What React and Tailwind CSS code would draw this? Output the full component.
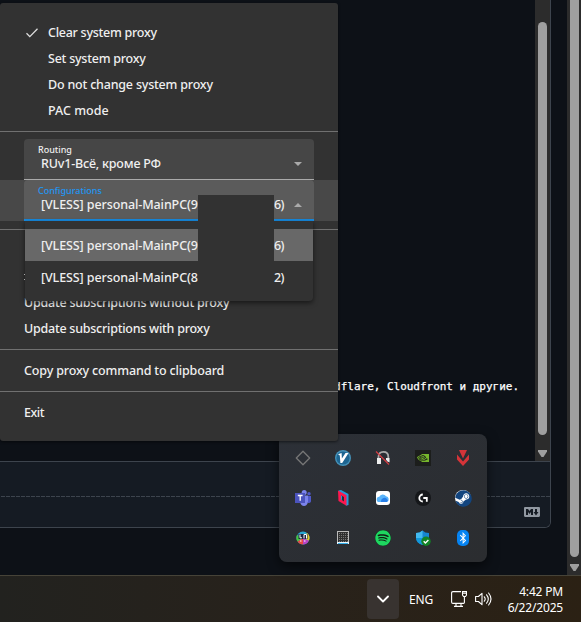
import { FaBluetoothB, FaSpotify, FaSteam } from "react-icons/fa";
import { SiNvidia } from "react-icons/si";

const ui = "font-['Noto_Sans','Open_Sans',sans-serif]";

function Page() {
  return (
    <div className="flex h-[575px] w-full overflow-hidden bg-[#0d1117]">
      <div className="flex h-[528px] w-[551px] flex-col overflow-hidden rounded-br-md border-r border-b border-[#3d444d]">
        <div className="flex h-[461px] shrink-0">
          <div className="flex flex-1 items-end justify-end pr-4 pb-[65px]">
            <p className="font-['DejaVu_Sans_Mono','Liberation_Mono',monospace] text-[11px] leading-[18px] tracking-[-0.02px] whitespace-pre text-white [-webkit-text-stroke:0.25px_white]">
              Cloudflare, Cloudfront и другие.
            </p>
          </div>
          <div className="flex w-[15px] flex-col items-center bg-[#2c2c2c] pt-[22px]">
            <div className="h-[413px] w-[9px] rounded-full bg-[#9f9f9f]" />
            <svg className="mt-[15px] h-[7px] w-[9px]" viewBox="0 0 9 7">
              <path d="M0 0h9v1.5L5.5 7h-2L0 1.5z" fill="#9f9f9f" />
            </svg>
          </div>
        </div>
        <div className="flex flex-1 flex-col border-t border-[#3d444d] bg-[#151b23]">
          <svg className="mt-[34px] h-px w-full shrink-0">
            <path d="M1 .5H551" stroke="#3d444d" strokeDasharray="4 1" />
          </svg>
          <div className="flex flex-1 items-center justify-end pr-[10px]">
            <svg className="h-4 w-4" viewBox="0 0 16 16" fill="#9198a1">
              <path d="M14.85 3c.63 0 1.15.52 1.14 1.15v7.7c0 .63-.51 1.15-1.15 1.15H1.15C.52 13 0 12.48 0 11.84V4.15C0 3.52.52 3 1.15 3ZM9 11V5H7L5.5 7 4 5H2v6h2V8l1.5 1.92L7 8v3Zm2.99.5L14.5 8H13V5h-2v3H9.5Z" />
            </svg>
          </div>
        </div>
      </div>
      <div className="ml-auto flex w-[14px] flex-col items-center bg-[#2c2c2c]">
        <div className="h-[557px] w-[9px] rounded-b-full bg-[#9f9f9f]" />
        <svg className="mt-[7px] h-[7px] w-[9px]" viewBox="0 0 9 7">
          <path d="M0 0h9v1.5L5.5 7h-2L0 1.5z" fill="#9f9f9f" />
        </svg>
      </div>
    </div>
  );
}

function Taskbar() {
  return (
    <div className={`${ui} flex h-[47px] items-center border-t border-[#464338] bg-linear-to-r from-[#22221f] via-[#28221b] to-[#2b2114] pl-[367px] text-white`}>
      <div className="flex h-10 w-8 items-center justify-center rounded bg-[#383330]">
        <svg className="h-2 w-3" viewBox="0 0 12 8" fill="none" stroke="white" strokeWidth="1.8" strokeLinecap="round" strokeLinejoin="round">
          <path d="M1 1.5l5 5 5-5" />
        </svg>
      </div>
      <span className="mt-[2px] ml-[10px] w-[42px] text-[12px] tracking-[-0.2px]">ENG</span>
      <svg className="h-[17px] w-4 shrink-0" viewBox="0 0 16 17" fill="none" stroke="white" strokeWidth="1.1">
        <path d="M10 .6H2Q.6.6.6 2v9q0 1.4 1.4 1.4h10.5q.9 0 .9-.9V6M5 12.5v3m5-3v3M3 15.4h9M11.5.6h4v3.5l-1 1.4h-2l-1-1.4zM11.5 2.3h4" />
      </svg>
      <svg className="ml-2 h-4 w-[17px] shrink-0" viewBox="0 0 17 16" fill="none" stroke="white" strokeWidth="1.1" strokeLinecap="round" strokeLinejoin="round">
        <path d="M.6 5.5h2.8L7 2.3v11.4l-3.6-3.2H.6zM9.3 5.8q1.8 2.2 0 4.4M11.6 3.8q3.4 4.2 0 8.4M13.6 2q4.8 6 0 12" />
      </svg>
      <div className="mr-[18px] ml-auto pt-px text-right text-[12px] leading-4 tracking-[-0.18px]">
        <div>4:42 PM</div>
        <div>6/22/2025</div>
      </div>
    </div>
  );
}

function Item({ children, checked, inset, track = "" }) {
  return (
    <div className={`flex h-[26px] items-center pl-6 ${track}`}>
      {inset && (
        <span className="flex w-6 items-center pl-[2px]">
          {checked && (
            <svg className="h-[10px] w-3" viewBox="0 0 12 10" fill="none" stroke="#dedede" strokeWidth="1.3">
              <path d="M.5 5.3l3.3 3.3L11.5.8" />
            </svg>
          )}
        </span>
      )}
      {children}
    </div>
  );
}

function Choice({ tail, children }) {
  return (
    <>
      <span className="w-[157px] overflow-hidden tracking-[-0.1px]">{children}</span>
      <span className="ml-[76px] flex w-[11px] justify-start overflow-visible tracking-[-0.7px]">{tail}</span>
    </>
  );
}

function ProxyMenu() {
  return (
    <div className={`${ui} absolute top-[3px] left-0 h-[438px] w-[338px] rounded-[3px] bg-[#323232] text-[12.5px] leading-4 font-medium whitespace-nowrap text-[#efefef] shadow-[0_1px_3px_#0008]`}>
      <div className="h-[129px] border-b border-[#707070] pt-[17px]">
        <Item inset checked track="tracking-[-0.26px]">Clear system proxy</Item>
        <Item inset track="tracking-[-0.24px]">Set system proxy</Item>
        <Item inset track="tracking-[-0.2px]">Do not change system proxy</Item>
        <Item inset track="tracking-[0.02px]">PAC mode</Item>
      </div>
      <div className="mx-6 mt-[7px] flex h-[41px] flex-col rounded-t border-b border-[#aaa] bg-[#464646] pt-[5px] pl-[14px]">
        <span className="h-[11px] text-[9px] leading-[11px]">Routing</span>
        <div className="mt-px flex h-[16px] items-center justify-between pr-3 pl-[3px]">
          <span className="tracking-[-0.18px]">RUv1-Всё, кроме РФ</span>
          <svg className="h-1 w-2" viewBox="0 0 8 4"><path d="M0 0h8L4 4z" fill="#aaa" /></svg>
        </div>
      </div>
      <div className="h-[41px] bg-[#484848] px-6">
        <div className="h-[41px] rounded-t border-b-2 border-[#168ae0] bg-[#5b5b5b] pt-[5px] pl-[14px]">
          <div className="h-[11px] text-[9px] leading-[11px] text-[#2196f3]">Configurations</div>
          <div className="mt-px flex h-4 items-center pl-[3px]">
            <Choice tail="6)">[VLESS] personal-MainPC(9</Choice>
            <svg className="ml-[9px] h-1 w-2" viewBox="0 0 8 4"><path d="M0 4h8L4 0z" fill="#aaa" /></svg>
          </div>
        </div>
      </div>
      <div className="mt-2 h-px bg-[#707070]" />
      <div className="pt-[60px]">
        <Item track="tracking-[-0.24px]">Update subscriptions without proxy</Item>
        <Item track="tracking-[-0.25px]">Update subscriptions with proxy</Item>
      </div>
      <div className="mt-[7px] border-y border-[#707070] py-2 pb-[7px]">
        <Item track="tracking-[-0.15px]">Copy proxy command to clipboard</Item>
      </div>
      <div className="pt-2"><Item track="tracking-[-0.5px]">Exit</Item></div>
      <div className="absolute top-[218px] left-[25px] h-20 w-[288px] rounded-b bg-[#323232] pt-2 shadow-[0_2px_5px_#0008]">
        <div className="flex h-8 items-center bg-[#686868] pt-[2px] pl-4">
          <Choice tail="6)">[VLESS] personal-MainPC(9</Choice>
        </div>
        <div className="flex h-8 items-center pt-[2px] pl-4">
          <Choice tail="2)">[VLESS] personal-MainPC(8</Choice>
        </div>
      </div>
      <div className="absolute top-[192px] left-[198px] h-[104px] w-[76px] bg-[#323232]" />
      <div className="absolute top-[271px] left-6 h-[6px] w-px border-y border-[#aaa]" />
    </div>
  );
}

const svg = "h-4 w-4";

function Tray() {
  return (
    <div className="absolute top-[434px] left-[279px] grid h-32 w-52 grid-cols-5 grid-rows-3 place-items-center rounded-lg bg-linear-to-br from-[#2c3037] to-[#2b2d30] p-1 shadow-[0_4px_12px_#0009]">
      <svg className={svg} viewBox="0 0 16 16"><path d="M8 1.3L14.7 8 8 14.7 1.3 8z" fill="none" stroke="#777" strokeWidth="1.3" strokeLinejoin="round" /></svg>
      <svg className={svg} viewBox="0 0 16 16"><circle cx="8" cy="8" r="8" fill="#4592b9" /><circle cx="8" cy="8" r="6.6" fill="#1d6591" /><path d="M3 4.2l3.6-1.2.3 5.5L10.5 3h3L7.2 13H5.4L4.8 5.6z" fill="#fff" /></svg>
      <svg className={svg} viewBox="0 0 16 16"><path d="M3.5 9V7C3.5 3.5 5.3 1.8 8.3 1.8s5 2 5 5V12" fill="none" stroke="#aaa" strokeWidth="1.8" /><path d="M2 8h4v6H2zM11 8h3.5v4.5L11 10z" fill="#eee" /><path d="M1 1.5L14 14.5" stroke="#d13b42" strokeWidth="1.3" /></svg>
      <div className="flex h-4 w-4 items-center justify-center bg-[#1c1e1c]"><SiNvidia size={12} color="#76b62c" /></div>
      <svg className={svg} viewBox="0 0 16 16" fill="#d53439"><path d="M4 0h8L8 8.5zM2 4.5l6 7 6-7v5l-6 6.5-6-6.5z" /></svg>

      <svg className={svg} viewBox="0 0 16 16"><circle cx="9.2" cy="2.5" r="2.5" fill="#7b83eb" /><circle cx="14" cy="3.8" r="1.7" fill="#5059c9" /><path d="M7 5.5h6V12q-1 4-4 4t-4-4z" fill="#7b83eb" /><path d="M13 6h3v5q0 2-3 2z" fill="#5059c9" /><path d="M0 3h10v10H0z" fill="#4b53bc" /><path d="M2.8 5.5h4.8M5.2 5.5v5.3" stroke="#fff" strokeWidth="1.3" /></svg>
      <svg className={svg} viewBox="0 0 16 16"><path d="M3.5.5L6 0l7.5 4v11L11 15.7z" fill="#2698d9" /><path d="M3 .5l8.5 4.8v10.4L3.5 11z" fill="#ff174f" /><path d="M6 5.3v4.3l3 2V7z" fill="#2a3038" /><path d="M6 5.3v4.3l1 .6V6z" fill="#2698d9" /></svg>
      <svg className={svg} viewBox="0 0 16 16"><rect x="1" y="1" width="14" height="14" rx="3" fill="#fff" /><path d="M4.3 12a2.6 2.6 0 010-5.2A3.7 3.7 0 0111 6.3 3 3 0 0112 12z" fill="#5ab4fa" /><path d="M6 12a3.5 3.5 0 016-3 2 2 0 010 3z" fill="#287fe9" /></svg>
      <svg className={svg} viewBox="0 0 16 16"><circle cx="8" cy="8" r="8" fill="#15171a" /><path d="M7.8 4.5a3.5 3.5 0 100 7M8.3 8h3.5v3.7" fill="none" stroke="#fff" strokeWidth="1.8" /></svg>
      <div className="flex h-4 w-4 items-center justify-center rounded-full bg-white"><FaSteam size={17} color="#12457f" className="shrink-0" /></div>

      <svg className={svg} viewBox="0 0 16 16"><circle cx="8" cy="8" r="6.5" fill="#29a9d4" /><path d="M8 8L2 5A6.5 6.5 0 002.5 11.5z" fill="#45c642" /><path d="M8 8l-5.5 3.5A6.5 6.5 0 008 14.5z" fill="#e84a42" /><path d="M8 8v6.5a6.5 6.5 0 006-4z" fill="#b943c4" /><path d="M8 8l6 2.5A6.5 6.5 0 0012 3z" fill="#e5c929" /><path d="M3.5 4h9v5h-9z" fill="#1c2844" /><path d="M5 4.5v3.3h2M9 8.5V4.5h2.5v4" fill="none" stroke="#fff" /><path d="M5 11h1.5M9 11h1.5" stroke="#fff" /></svg>
      <svg className={svg} viewBox="0 0 16 16"><path d="M2 1h12v13H2z" fill="#bbb" /><path d="M3 2h10v10H3z" fill="#303030" /><path d="M4 3.5h9M4 5.5h9M4 7.5h9M4 9.5h9M4 11.5h9" stroke="#777" strokeDasharray="1 1" /><path d="M2 13h12" stroke="#e8f6fd" strokeWidth="2" /><path d="M3 13.5h10" stroke="#36aee9" /></svg>
      <div className="flex h-4 w-4 items-center justify-center rounded-full bg-[#101c14]"><FaSpotify size={16} color="#1ed760" /></div>
      <svg className={svg} viewBox="0 0 16 16"><path d="M7.5.5Q10 3 14 3v4q0 6-6.5 8Q1 13 1 7V3q4 0 6.5-2.5z" fill="#1686d1" /><path d="M7.5.5V8H1V3q4 0 6.5-2.5z" fill="#42baf0" /><path d="M7.5 8v7Q1 13 1 8z" fill="#1298dc" /><circle cx="11" cy="11.3" r="4.7" fill="#128325" /><path d="M8.7 11.3l1.7 1.7 3-3.1" fill="none" stroke="#fff" strokeWidth="1.4" /></svg>
      <div className="flex h-4 w-3 items-center justify-center rounded-[5px] bg-[#0583f2]"><FaBluetoothB size={12} color="white" /></div>
    </div>
  );
}

export default function App() {
  return (
    <div className="relative h-[622px] w-[581px] overflow-hidden">
      <Page />
      <Taskbar />
      <Tray />
      <ProxyMenu />
    </div>
  );
}
